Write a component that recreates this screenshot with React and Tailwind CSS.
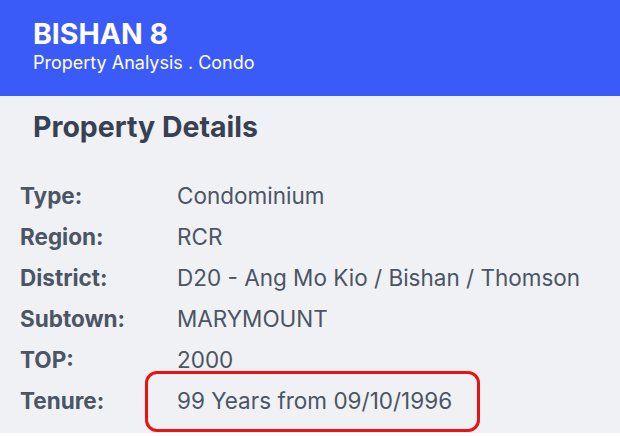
import React from "react";

const rows = [
  { label: "Type:", value: "Condominium" },
  { label: "Region:", value: "RCR" },
  { label: "District:", value: "D20 - Ang Mo Kio / Bishan / Thomson" },
  { label: "Subtown:", value: "MARYMOUNT" },
  { label: "TOP:", value: "2000" },
  { label: "Tenure:", value: "99 Years from 09/10/1996", highlight: true },
];

export default function App() {
  return (
    <div
      className="w-[620px] h-[436px] overflow-hidden flex flex-col bg-white"
      style={{ fontFamily: "Inter, 'Noto Sans', sans-serif" }}
    >
      <div className="h-[96px] shrink-0 bg-[#3a5bf8] px-[33px] pt-[17px] text-white">
        <h1 className="text-[28.5px] font-bold leading-[34px]">BISHAN 8</h1>
        <p className="text-[18px] leading-[22px] mt-[1px]">Property Analysis . Condo</p>
      </div>

      <div className="h-[337px] shrink-0 bg-[#f0f1f5]">
        <div className="px-[33px] pt-[14px]">
          <h2 className="text-[28.5px] font-bold text-[#374151] leading-[34px]">Property Details</h2>
        </div>

        <div className="mt-[31px] pl-[20px] flex flex-col">
          {rows.map((r) => (
            <div key={r.label} className="relative flex items-center h-[41px]">
              <div className="w-[157px] text-[22.5px] font-bold text-[#4b5563]">{r.label}</div>
              <div className="text-[22.5px] text-[#4b5563]">{r.value}</div>
              {r.highlight && (
                <div className="absolute left-[125px] top-[-9px] w-[335px] h-[61px] border-[3px] border-[#ee1111] rounded-[12px]" />
              )}
            </div>
          ))}
        </div>
      </div>
    </div>
  );
}
